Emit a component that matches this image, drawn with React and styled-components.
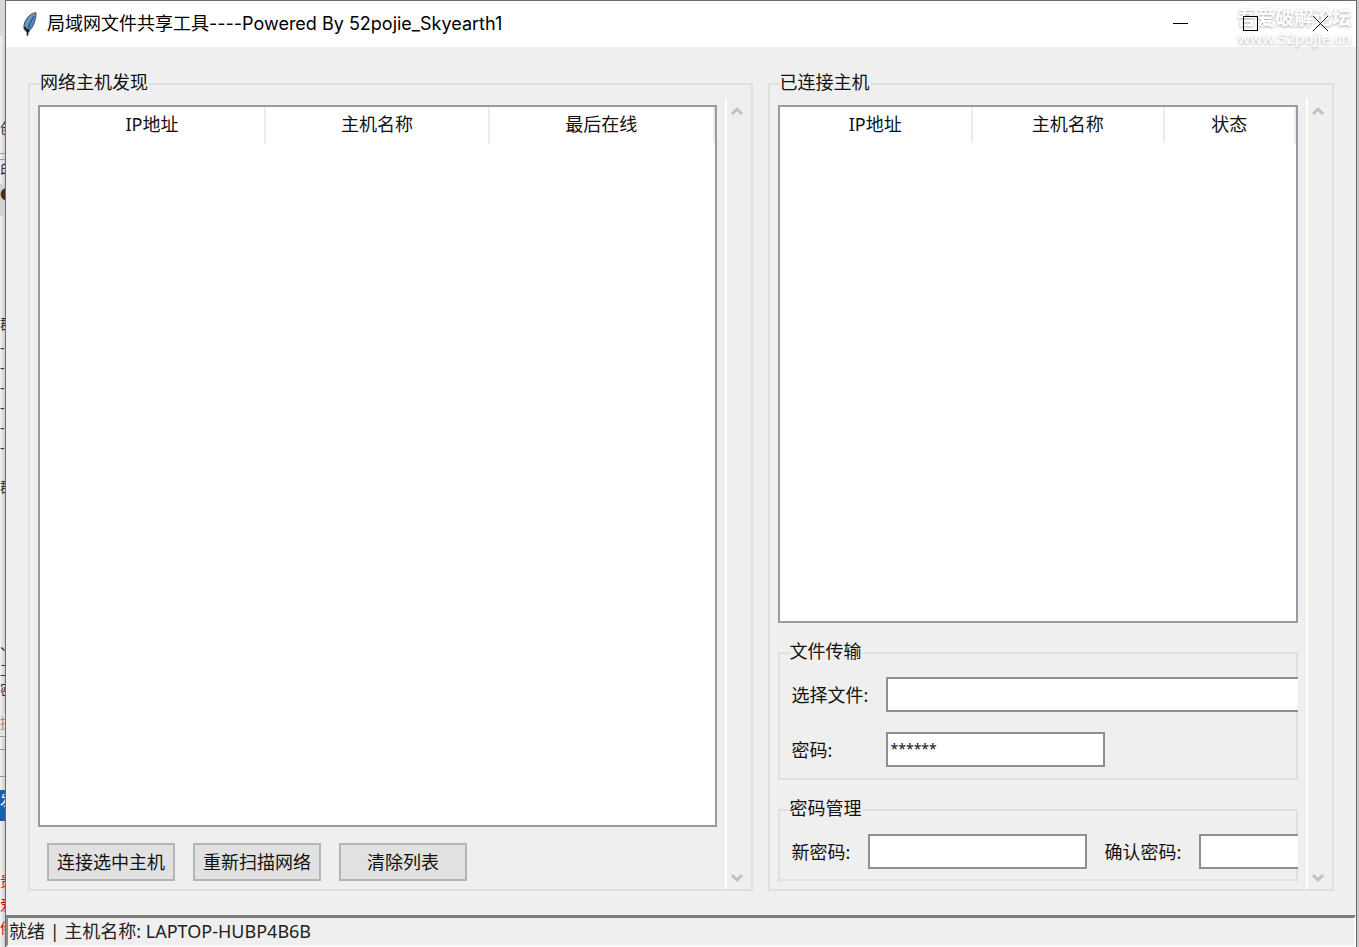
import React, { useState } from 'react';
import styled, { createGlobalStyle } from 'styled-components';

const GlobalStyle = createGlobalStyle`
  * {
    box-sizing: border-box;
  }

  body {
    margin: 0;
    background-color: #efefef;
    color: #111;
    font-family: "Noto Sans", "Noto Sans CJK SC", sans-serif;
    font-size: 18px;
    line-height: 24px;
  }

  button, input {
    font: inherit;
    color: inherit;
  }
`;

const Desktop = styled.div`
  display: flex;
  min-height: 100vh;
  overflow: hidden;
`;

const Edge = styled.div`
  flex: none;
  width: ${(props) => props.$width};
  height: 100vh;
  overflow: hidden;
  background: ${(props) => props.$background};
`;

const EdgeLine = styled.div`
  height: ${(props) => props.$height};
  overflow: hidden;
  white-space: nowrap;
  font-size: 14px;
  line-height: 20px;
  color: ${(props) => props.$color || '#333'};
  background: ${(props) => props.$background || 'transparent'};
  border-bottom: ${(props) => (props.$ruled ? '1px solid #999' : 'none')};
`;

const Window = styled.div`
  position: relative;
  flex: 1;
  min-width: 0;
  display: flex;
  flex-direction: column;
  background-color: #efefef;
  border: 1px solid #6b6b6b;
  border-bottom: none;
`;

const TitleBar = styled.header`
  display: flex;
  align-items: center;
  height: 46px;
  padding-left: 17px;
  background-color: #fff;
`;

const Title = styled.h1`
  flex: 1;
  margin: 0;
  padding-left: 10px;
  font-family: Inter, "Noto Sans CJK SC", sans-serif;
  font-size: 18px;
  font-weight: 400;
  color: #000;
`;

const CaptionButton = styled.button`
  position: relative;
  z-index: 1;
  display: flex;
  align-items: center;
  justify-content: center;
  width: 70px;
  height: 46px;
  padding: 0 1px 2px 0;
  border: none;
  background: none;

  &:hover {
    background-color: #e5e5e5;
  }
`;

const Watermark = styled.div`
  position: absolute;
  top: 6px;
  right: 5px;
  text-align: right;
  color: #fff;
  font-size: 19px;
  font-weight: 700;
  line-height: 22px;
  text-shadow: 0 1px 3px rgba(0, 0, 0, 0.35);
  pointer-events: none;
`;

const WatermarkUrl = styled.div`
  font-size: 15px;
  font-weight: 500;
  line-height: 18px;
`;

const Body = styled.main`
  flex: 1;
  display: flex;
  gap: 15px;
  padding: 25px 22px 24px;
`;

const Group = styled.fieldset`
  display: flex;
  flex: ${(props) => props.$flex || 'none'};
  flex-direction: ${(props) => props.$direction || 'row'};
  min-width: 0;
  margin: 0;
  padding: 0;
  border: 2px solid #e0e0e0;
`;

const Legend = styled.legend`
  height: 24px;
  margin-left: 10px;
  padding: 0 1px 0 0;
  line-height: 20px;
`;

const Content = styled.div`
  flex: 1;
  min-width: 0;
  padding: 9px 8px 8px;
`;

const Column = styled.div`
  display: flex;
  flex-direction: column;
  gap: ${(props) => props.$gap};
  height: 100%;
  overflow: hidden;
`;

const Scroll = styled.div`
  display: flex;
  flex-direction: column;
  justify-content: space-between;
  width: 26px;
  margin-top: 2px;
  border-left: 2px solid #fff;
`;

const ScrollButton = styled.button`
  display: flex;
  align-items: center;
  justify-content: center;
  height: 24px;
  padding: 2px 4px 0 0;
  border: none;
  background: none;
`;

const TreeFrame = styled.div`
  flex: 1;
  background-color: #fff;
  border: 2px solid #979ba3;
`;

const Tree = styled.table`
  width: 100%;
  table-layout: fixed;
  border-collapse: collapse;
`;

const HeadCell = styled.th`
  width: ${(props) => props.$width};
  height: 36px;
  padding: 0 0 2px;
  border-right: 2px solid #ebebeb;
  font-weight: 400;
  line-height: 24px;
`;

const ButtonRow = styled.div`
  display: flex;
  gap: 18px;
  padding-left: 9px;
`;

const Button = styled.button`
  width: 128px;
  height: 38px;
  padding: 0;
  border: 2px solid #b4b4b4;
  background-color: #e1e1e1;

  &:hover {
    background-color: #e5f1fb;
    border-color: #0078d7;
  }
`;

const Form = styled.div`
  display: flex;
  flex-direction: column;
  gap: 20px;
  padding: ${(props) => props.$padding};
`;

const Field = styled.div`
  display: flex;
  flex: none;
  align-items: center;
`;

const FieldRow = styled.div`
  display: flex;
  gap: 18px;
`;

const Label = styled.label`
  flex: none;
  width: ${(props) => props.$width};
`;

const Entry = styled.input`
  flex: none;
  width: ${(props) => props.$width || '219px'};
  height: 35px;
  padding: 0 3px 2px;
  border: 2px solid #8f8f8f;
  border-radius: 0;
  background-color: #fff;
  font-size: 14px;
  outline: none;

  &:focus {
    border-color: #0078d7;
  }
`;

const StatusBar = styled.footer`
  height: 32px;
  padding-left: 1px;
  line-height: 26px;
  color: #222;
  border-top: 3px solid #7c7c7c;
  border-left: 2px solid #8c8c8c;
  border-right: 2px solid #fafafa;
  border-bottom: 2px solid #fafafa;
`;

const edgeLines = [
  { height: '36px', background: '#d8d8d8' },
  { height: '82px' },
  { height: '36px', text: '创', ruled: true },
  { height: '6px', ruled: true },
  { height: '24px', text: '印' },
  { height: '32px', text: '●', background: '#d3d3d3' },
  { height: '98px' },
  { height: '24px', text: '群' },
  { height: '20px', text: '-' },
  { height: '20px', text: '-' },
  { height: '20px', text: '-' },
  { height: '20px', text: '-' },
  { height: '20px', text: '-' },
  { height: '39px', text: '-' },
  { height: '158px', text: '群' },
  { height: '25px', text: '、' },
  { height: '20px', text: '工' },
  { height: '33px', text: '密' },
  { height: '24px', text: '提', color: '#9b8b7c', background: '#e4e4e4', ruled: true },
  { height: '13px', ruled: true },
  { height: '27px', text: '｜', ruled: true },
  { height: '13px' },
  { height: '31px', text: '发', color: '#fff', background: '#1d5fa8' },
  { height: '50px' },
  { height: '24px', text: '贵', color: '#e60000' },
  { height: '23px', text: '爱', color: '#e60000' },
  { height: '24px', text: '件', color: '#e60000' },
];

const Feather = () => (
  <svg width="14" height="24" viewBox="0 0 14 24" aria-hidden="true">
    <path
      d="M12.800 .6C9.500 .8 5.500 3.500 3.200 7.500 1.200 11 .4 14.500 1.200 17.500L3.800 20 6.500 18.500C9.500 15.500 11.500 11.500 12.200 7.500 12.600 5 13.400 2.500 12.800 .6Z"
      fill="#4a8ac6"
      stroke="#4a4d52"
      strokeWidth="1"
    />
    <path d="M11.500 1.800C8 3.500 5.500 7 3.800 11L2.800 15" fill="none" stroke="#8a979f" strokeWidth="1.800" />
    <path d="M11 4C8.500 8.500 5.500 13 4.400 23.500" fill="none" stroke="#1f4f7c" strokeWidth="1" />
    <path d="M4.400 23.500 4.800 17.500M1.500 15 4.500 19.500 6.500 18.500" fill="none" stroke="#161616" strokeWidth="1.600" />
  </svg>
);

const Chevron = ({ down }) => (
  <svg width="12" height="10" viewBox="0 0 12 10" aria-hidden="true">
    <path d={down ? 'M1 2 6 7 11 2' : 'M1 8 6 3 11 8'} fill="none" stroke="#c1c1c1" strokeWidth="3" />
  </svg>
);

const ScrollBar = () => (
  <Scroll>
    <ScrollButton aria-label="向上滚动">
      <Chevron />
    </ScrollButton>
    <ScrollButton aria-label="向下滚动">
      <Chevron down />
    </ScrollButton>
  </Scroll>
);

const TreeView = ({ columns }) => (
  <TreeFrame>
    <Tree>
      <thead>
        <tr>
          {columns.map((column) => (
            <HeadCell key={column.name} $width={column.width} scope="col">
              {column.name}
            </HeadCell>
          ))}
        </tr>
      </thead>
    </Tree>
  </TreeFrame>
);

const hostColumns = [
  { name: 'IP地址', width: '33.4%' },
  { name: '主机名称', width: '33.3%' },
  { name: '最后在线', width: '33.3%' },
];

const connectedColumns = [
  { name: 'IP地址', width: '37.3%' },
  { name: '主机名称', width: '37.2%' },
  { name: '状态', width: '25.5%' },
];

const App = () => {
  const [file, setFile] = useState('');
  const [password, setPassword] = useState('******');
  const [newPassword, setNewPassword] = useState('');
  const [confirm, setConfirm] = useState('');

  return (
    <Desktop>
      <GlobalStyle />
      <Edge $width="5px" $background="linear-gradient(to right, #f2f2f2, #cfcfcf)" aria-hidden="true">
        {edgeLines.map((line, index) => (
          <EdgeLine
            key={index}
            $height={line.height}
            $color={line.color}
            $background={line.background}
            $ruled={line.ruled}
          >
            {line.text}
          </EdgeLine>
        ))}
      </Edge>

      <Window>
        <TitleBar>
          <Feather />
          <Title>局域网文件共享工具----Powered By 52pojie_Skyearth1</Title>
          <CaptionButton aria-label="最小化">
            <svg width="15" height="15" viewBox="0 0 15 15" shapeRendering="crispEdges">
              <path d="M0 7.500H15" stroke="#000" />
            </svg>
          </CaptionButton>
          <CaptionButton aria-label="最大化">
            <svg width="15" height="15" viewBox="0 0 15 15" shapeRendering="crispEdges">
              <path d="M.5 .5H14.500V14.500H.5Z" fill="none" stroke="#000" />
            </svg>
          </CaptionButton>
          <CaptionButton aria-label="关闭">
            <svg width="15" height="15" viewBox="0 0 15 15">
              <path d="M0 0 15 15M15 0 0 15" stroke="#222" />
            </svg>
          </CaptionButton>
        </TitleBar>

        <Body>
          <Group $flex="725 1 0">
            <Legend>网络主机发现</Legend>
            <Content>
              <Column $gap="16px">
                <TreeView columns={hostColumns} />
                <ButtonRow>
                  <Button>连接选中主机</Button>
                  <Button>重新扫描网络</Button>
                  <Button>清除列表</Button>
                </ButtonRow>
              </Column>
            </Content>
            <ScrollBar />
          </Group>

          <Group $flex="566 1 0">
            <Legend>已连接主机</Legend>
            <Content>
              <Column $gap="18px">
                <TreeView columns={connectedColumns} />
                <Group $direction="column">
                  <Legend>文件传输</Legend>
                  <Form $padding="12px 0 11px 12px">
                    <Field>
                      <Label $width="94px" htmlFor="file">选择文件:</Label>
                      <Entry id="file" $width="430px" value={file} onChange={(e) => setFile(e.target.value)} />
                    </Field>
                    <Field>
                      <Label $width="94px" htmlFor="password">密码:</Label>
                      <Entry id="password" value={password} onChange={(e) => setPassword(e.target.value)} />
                    </Field>
                  </Form>
                </Group>
                <Group $direction="column">
                  <Legend>密码管理</Legend>
                  <Form $padding="12px 0 10px 12px">
                    <FieldRow>
                      <Field>
                        <Label $width="76px" htmlFor="new-password">新密码:</Label>
                        <Entry
                          id="new-password"
                          type="password"
                          value={newPassword}
                          onChange={(e) => setNewPassword(e.target.value)}
                        />
                      </Field>
                      <Field>
                        <Label $width="94px" htmlFor="confirm">确认密码:</Label>
                        <Entry
                          id="confirm"
                          type="password"
                          value={confirm}
                          onChange={(e) => setConfirm(e.target.value)}
                        />
                      </Field>
                    </FieldRow>
                  </Form>
                </Group>
              </Column>
            </Content>
            <ScrollBar />
          </Group>
        </Body>

        <StatusBar>就绪 | 主机名称: LAPTOP-HUBP4B6B</StatusBar>

        <Watermark aria-hidden="true">
          吾爱破解论坛
          <WatermarkUrl>www.52pojie.cn</WatermarkUrl>
        </Watermark>
      </Window>

      <Edge $width="2px" $background="#c9c9c9" aria-hidden="true" />
    </Desktop>
  );
};

export default App;
